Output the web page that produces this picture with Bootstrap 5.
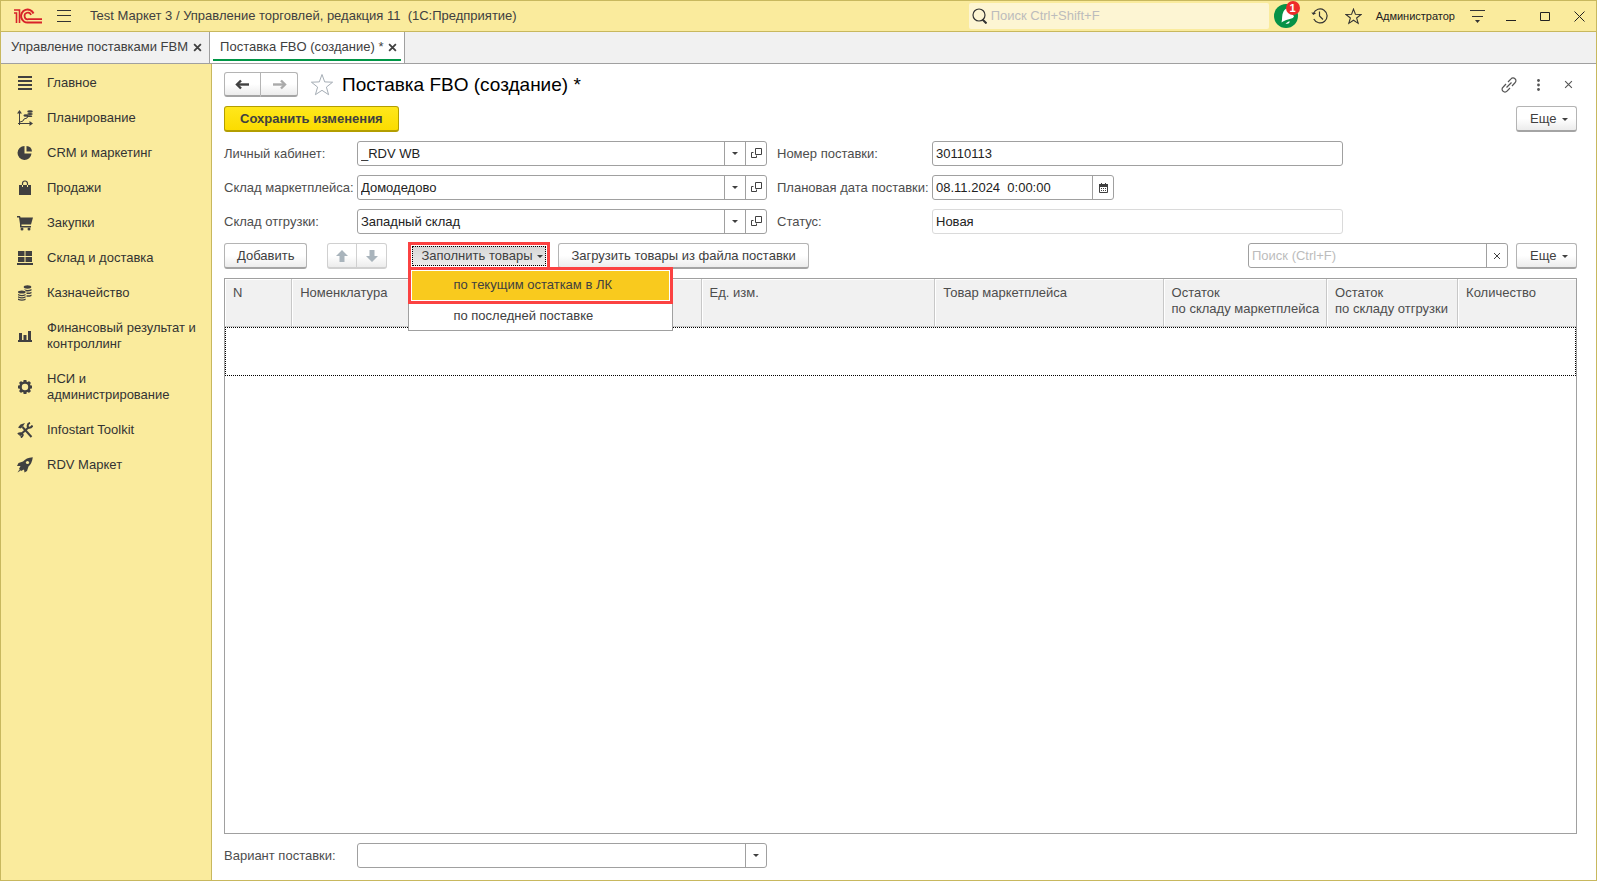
<!DOCTYPE html>
<html lang="ru">
<head>
<meta charset="utf-8">
<meta name="viewport" content="width=device-width, initial-scale=1">
<title>Поставка FBO (создание)</title>
<link href="https://cdn.jsdelivr.net/npm/bootstrap@5.3.0/dist/css/bootstrap.min.css" rel="stylesheet">
<style>
  :root { --gold: #c8b85e; --cream: #faeb9d; --ink: #404040; --line: #a0a0a0; }
  body { font: 13px/16px "Liberation Sans", Arial, sans-serif; color: var(--ink); background: #fff; }
  a { color: inherit; text-decoration: none; }
  svg { display: block; flex: none; }
  .app-window { border: 1px solid var(--gold); }
  .icon-btn { border: 0; background: none; padding: 0; color: inherit; display: flex; align-items: center; justify-content: center; }

  .title-bar { background: var(--cream); height: 31px; border-bottom: 1px solid var(--gold); padding-left: 12px; }
  .main-menu { margin-left: 14px; }
  .app-name { margin-left: 19px; }
  .app-search { background: #fdf5d3; width: 300px; height: 26px; border-radius: 2px; padding-left: 3px; }
  .app-search input { border: 0; background: none; outline: 0; padding: 0 0 0 4px; width: 100%; }
  input::placeholder { color: #bcbcbc; opacity: 1; }
  .win-tools .icon-btn { width: 34px; height: 30px; }
  .user-name { font-size: 11px; padding: 0 5px; color: #222; }
  .bell { width: 24px; height: 24px; }
  .bell-count { position: absolute; top: -3px; right: -2px; width: 14px; height: 14px; border-radius: 50%; background: #ee2a2a; color: #fff; font-size: 11px; font-weight: bold; line-height: 14px; text-align: center; }

  .tab-strip { background: #f1f1f1; height: 32px; border-bottom: 1px solid var(--line); }
  .doc-tab { border-right: 1px solid var(--line); padding: 0 7px 1px 10px; gap: 5px; }
  .doc-tab.current { background: #fff; box-shadow: inset 3px 0 #fff, inset -3px 0 #fff, inset 0 -2px #fff, inset 0 -4px #009646; }

  .side-menu { width: 211px; background: var(--cream); border-right: 1px solid var(--gold); padding-top: 1px; }
  .side-menu a { display: flex; align-items: center; gap: 14px; padding: 10px 14px 9px 16px; color: #333; }

  .work-area { padding: 8px 19px 12px 12px; min-width: 0; }
  .stack > * + * { margin-top: 9px; }
  .form-title { font-size: 19px; line-height: 24px; color: #000; margin: 0; }
  .push { font-size: 13px; line-height: 16px; height: 26px; padding: 0 12px; color: var(--ink); border: 1px solid #b4b4b4; border-bottom: 2px solid #a4a4a4; border-radius: 3px; background: linear-gradient(#fff 50%, #ececec); white-space: nowrap; }
  .push.split { padding: 0; display: flex; align-items: center; justify-content: center; }
  .push.primary { font-weight: bold; border-color: #b39e00; background: linear-gradient(#ffe71c, #fbdc00); padding: 0 15px; }
  .push.more { padding: 0 5px 0 10px; width: 61px; }
  .push.pale { border-color: #d0d0d0; }
  .push.nav-arrow { width: 37px; height: 25px; }
  .push.move { width: 30px; }
  .caret-sm { display: inline-block; border: 3px solid transparent; border-top-color: currentColor; border-bottom: 0; vertical-align: 2px; }
  .more .caret-sm { margin-left: 2px; }

  .field-grid { display: grid; grid-template-columns: 133px 410fr 165px 411fr 234fr; row-gap: 9px; align-items: center; }
  .field-grid label { color: #4d4d4d; white-space: nowrap; }
  .field-grid label.second { padding-left: 10px; }
  .box { display: flex; height: 25px; border: 1px solid var(--line); border-radius: 3px; background: #fff; overflow: hidden; }
  .box input, .box select { flex: 1; min-width: 0; border: 0; outline: 0; padding: 0 3px; color: #222; background: none; appearance: none; }
  .box .icon-btn { width: 21px; border-left: 1px solid var(--line); flex: none; }
  .box.readonly { border-color: #dadada; }
  .date-box { width: 182px; }
  .list-search { width: 260px; }

  .fill-wrap { margin: -1px 0 -1px 21px; width: 142px; height: 28px; border: 3px solid #fb4242; }
  .fill-wrap .push { border: 1px solid #fff; border-radius: 0; height: 22px; width: 100%; padding: 0 3px 0 9px; background: linear-gradient(#d6d6d6, #ececec); outline: 1px dotted #000; outline-offset: -2px; }
  .fill-menu.dropdown-menu { top: 22px; left: -3px; width: 265px; min-width: 0; padding: 0; margin: 0; font-size: 13px; border: 1px solid var(--line); border-radius: 0; color: var(--ink); }
  .fill-menu .dropdown-item { line-height: 16px; padding: 5px 44px 6px; color: var(--ink); }
  .fill-menu .picked { margin: -1px; width: calc(100% + 2px); border: 3px solid #fb4242; box-shadow: inset 0 0 0 1px #fff; background: #f9ca1e; padding: 7px 42px 8px; }

  .list-frame { border: 1px solid var(--line); }
  .goods { width: 100%; table-layout: fixed; border-collapse: separate; border-spacing: 0; }
  .goods th { font-weight: normal; vertical-align: top; height: 48px; padding: 6px 8px; background: #f1f1f1; border-left: 1px solid #c8c8c8; border-bottom: 1px solid #c8c8c8; box-shadow: inset 1px 1px #fff; color: #4d4d4d; white-space: nowrap; overflow: hidden; }
  .goods th:first-child { border-left: 0; }
  .goods td { height: 49px; padding: 0; }
  .goods tbody tr { outline: 1px dotted #000; outline-offset: -1px; }
  .c-n { width: 4.9%; } .c-name { width: 30.3%; } .c-unit { width: 17.3%; } .c-item { width: 16.9%; } .c-mp { width: 12.1%; } .c-wh { width: 9.7%; }
</style>
</head>
<body>
<svg width="0" height="0" class="position-absolute" aria-hidden="true">
  <symbol id="i-open" viewBox="0 0 11 11"><path d="M4.500.500h6v6h-6zM2.500 4.500h-2v5h5v-2" fill="none" stroke="currentColor"/></symbol>
  <symbol id="i-x" viewBox="0 0 8 8"><path d="M1 1l6 6M7 1L1 7" stroke="currentColor" fill="none"/></symbol>
  <symbol id="i-xb" viewBox="0 0 8 8"><path d="M1 1l6 6M7 1L1 7" stroke="currentColor" stroke-width="1.600" fill="none"/></symbol>
  <symbol id="i-star" viewBox="0 0 24 24"><path d="M12 1.500l2.700 7.400 7.900.3-6.200 4.900 2.200 7.600L12 17.300l-6.600 4.400 2.200-7.600L1.400 9.200l7.900-.3z" fill="none" stroke="currentColor" stroke-width="var(--sw,1)"/></symbol>
</svg>

<div class="app-window min-vh-100 d-flex flex-column">
  <header class="title-bar d-flex align-items-center">
    <svg width="30" height="16" viewBox="0 0 30 16" fill="none" stroke="#d8232a" stroke-width="2" aria-label="1С"><path d="M1 5h2.500v10M1 2h5.500v13" stroke-width="1.600"/><path d="M20.500 5.500A6.500 6.500 0 1 0 15.500 14.500H29"/><path d="M18 7A3.300 3.300 0 1 0 15.500 11.200H29" stroke-width="1.700"/></svg>
    <button class="icon-btn main-menu" aria-label="Главное меню"><svg width="14" height="12" viewBox="0 0 14 12"><path d="M0 .5h14M0 5.500h14M0 11.500h14" stroke="#333"/></svg></button>
    <span class="app-name text-nowrap">Test Маркет 3 / Управление торговлей, редакция 11&nbsp; (1С:Предприятие)</span>
    <div class="app-search d-flex align-items-center ms-auto">
      <svg width="15" height="16" viewBox="0 0 15 16" fill="none" stroke="#333"><circle cx="7" cy="7" r="6" stroke-width="1.200"/><path d="M10.500 11.500l4 4" stroke-width="2"/></svg>
      <input type="search" placeholder="Поиск Ctrl+Shift+F" aria-label="Поиск">
    </div>
    <div class="win-tools d-flex align-items-center">
      <button class="icon-btn" aria-label="Уведомления"><span class="bell position-relative">
        <svg width="24" height="24" viewBox="0 0 24 24"><circle cx="12" cy="12" r="12" fill="#079247"/><path d="M7.500 18.500C8.500 15 7.500 11 9.500 7.500 11 5 13 3.500 15 4l5 8.500c-1.500 2.500-3.500 2-6 3-2.500.8-4.500 1.500-6.500 3z" fill="#fff"/><path d="M11.500 19.500l4-2.500q.5 3.500-4 2.500z" fill="#fff"/></svg>
        <span class="bell-count">1</span></span></button>
      <button class="icon-btn" aria-label="История"><svg width="17" height="16" viewBox="0 0 17 16" fill="none" stroke="#333" stroke-width="1.200"><path d="M2.500 5.500A7 7 0 1 1 2.800 11M8.500 3.500V8l3.500 3.500"/><path d="M.3 4.500l2 2.500 3-2z" fill="#333" stroke="none"/></svg></button>
      <button class="icon-btn" aria-label="Избранное"><svg width="17" height="17" color="#333" style="--sw:1.500"><use href="#i-star"/></svg></button>
      <a href="#" class="user-name">Администратор</a>
      <button class="icon-btn" aria-label="Настройки"><svg width="15" height="13" viewBox="0 0 15 13"><path d="M0 .5h15M2 6.500h11" stroke="#333"/><path d="M5 10h5l-2.500 3z" fill="#333"/></svg></button>
      <button class="icon-btn" aria-label="Свернуть"><svg width="10" height="9" viewBox="0 0 10 9"><path d="M0 8.500h10" stroke="#222"/></svg></button>
      <button class="icon-btn" aria-label="Развернуть"><svg width="10" height="9" viewBox="0 0 10 9"><path d="M.5.500h9v8h-9z" fill="none" stroke="#222"/></svg></button>
      <button class="icon-btn" aria-label="Закрыть"><svg width="11" height="11" viewBox="0 0 11 11"><path d="M.5.500l10 10M10.500.500l-10 10" stroke="#222"/></svg></button>
    </div>
  </header>

  <nav class="tab-strip d-flex">
    <div class="doc-tab d-flex align-items-center"><a href="#">Управление поставками FBM</a><button class="icon-btn" aria-label="Закрыть вкладку"><svg width="9" height="9"><use href="#i-xb"/></svg></button></div>
    <div class="doc-tab current d-flex align-items-center"><a href="#">Поставка FBO (создание) *</a><button class="icon-btn" aria-label="Закрыть вкладку"><svg width="9" height="9"><use href="#i-xb"/></svg></button></div>
  </nav>

  <div class="d-flex flex-grow-1">
    <nav class="side-menu flex-shrink-0">
      <a href="#"><svg width="16" height="16" viewBox="0 0 16 16"><path d="M1 2h14M1 6h14M1 10h14M1 14h14" stroke="#404040" stroke-width="2"/></svg>Главное</a>
      <a href="#"><svg width="16" height="16" viewBox="0 0 16 16" fill="#404040"><path d="M2.500 15V2M1 13.500h13M3 12l3-1 1-2 3-1 1-2" fill="none" stroke="#404040"/><path d="M0 3.500L2.500 0 5 3.500zM12.500 11l3.500 2.500-3.500 2.500z"/><ellipse cx="9" cy="5.500" rx="2.600" ry="1.200"/><ellipse cx="13" cy="1.500" rx="2.800" ry="1.200"/><ellipse cx="13" cy="4" rx="2.800" ry=".9"/><ellipse cx="12.500" cy="6.200" rx="2.800" ry=".9"/></svg>Планирование</a>
      <a href="#"><svg width="16" height="16" viewBox="0 0 16 16" fill="#404040"><path d="M7.500 1v7.500H14.500A7 7 0 1 1 7.500 1z"/><path d="M9.500 1A6 6 0 0 1 15 6.500H9.500z"/></svg>CRM и маркетинг</a>
      <a href="#"><svg width="16" height="16" viewBox="0 0 16 16"><path d="M2 5h12v10H2z" fill="#404040"/><path d="M5.500 7V3.500a2.500 2.500 0 0 1 5 0V7" fill="none" stroke="#404040" stroke-width="1.200"/><path d="M5.500 5v2M10.500 5v2" stroke="#faeb9d"/></svg>Продажи</a>
      <a href="#"><svg width="16" height="16" viewBox="0 0 16 16" fill="#404040"><path d="M0 1h3l.6 1.500H16L14 9.500H4.500V11H14v1.500H3V9L2 2.500H0z"/><circle cx="5" cy="14" r="1.500"/><circle cx="12" cy="14" r="1.500"/></svg>Закупки</a>
      <a href="#"><svg width="16" height="16" viewBox="0 0 16 16"><path d="M1 1h6.500v5H1zM8.500 1H15v5H8.500zM1 7h6.500v5H1zM8.500 7H15v5H8.500zM0 13h16v2H0z" fill="#404040"/></svg>Склад и доставка</a>
      <a href="#"><svg width="16" height="16" viewBox="0 0 16 16" fill="#404040"><ellipse cx="10.500" cy="2" rx="3.800" ry="1.700"/><path d="M7 4q3.500 2 7.500 0v1.500q-3 1.500-5.500.8zM9.500 7.500q3 .4 5-.8v1.500q-2 1.200-5 .8zM9.500 10.200q3 .4 5-.8v1.500q-2 1.200-5 .8z"/><ellipse cx="4.800" cy="7" rx="3.800" ry="1.500"/><path d="M1 9q4 2 7.600 0v1.200q-3.600 2-7.600 0zM1 11.300q4 2 7.600 0v1.200q-3.600 2-7.600 0zM1 13.600q4 2 7.600 0V15q-3.600 1.600-7.600 0z"/></svg>Казначейство</a>
      <a href="#"><svg width="16" height="16" viewBox="0 0 16 16"><path d="M1 12h14v2H1zM2 5h3v7H2zM6.500 7h3v5h-3zM11 3h3v9h-3z" fill="#404040"/></svg><span>Финансовый результат и контроллинг</span></a>
      <a href="#"><svg width="16" height="16" viewBox="0 0 16 16"><circle cx="8" cy="8" r="4.500" fill="none" stroke="#404040" stroke-width="2.600"/><path d="M8 1v3M8 12v3M1 8h3M12 8h3M3 3l2 2M11 11l2 2M13 3l-2 2M5 11l-2 2" stroke="#404040" stroke-width="3"/></svg><span>НСИ и администрирование</span></a>
      <a href="#"><svg width="16" height="16" viewBox="0 0 16 16" fill="none" stroke="#404040" stroke-width="2"><path d="M5.500 5L14.500 15"/><path d="M1 5.500L3.500 2.500 8 1 5.500 5 3.500 6.500z" fill="#404040" stroke="none"/><path d="M2.500 13.500L12 5"/><path d="M13 .8Q9.800 2 11 5.500q3 1 4.500-2M.8 12q3.500-2 5 1-.5 1.500-2 2.500"/></svg>Infostart Toolkit</a>
      <a href="#"><svg width="16" height="16" viewBox="0 0 16 16" fill="#404040"><path d="M15.800.2Q9 .8 6 4.500L1.500 6 0 9h3.500L2 12l2 2 3-1.500.5 3 2.500-1.500 1.500-4.500Q15 6.500 15.800.2z"/><circle cx="10.500" cy="5.500" r="1.600" fill="#faeb9d"/><path d="M.5 15.500l1.800-2.800 1 1z"/></svg>RDV Маркет</a>
    </nav>

    <main class="work-area stack flex-grow-1 d-flex flex-column">
      <div class="d-flex align-items-center">
        <div class="d-flex">
          <button class="push split nav-arrow rounded-end-0" aria-label="Назад"><svg width="15" height="11" viewBox="0 0 15 11" fill="none" stroke="#404040"><path d="M2 5.500h12" stroke-width="2.400"/><path d="M6 1.500L2 5.500l4 4" stroke-width="2.400"/></svg></button>
          <button class="push split nav-arrow rounded-start-0 border-start-0" aria-label="Вперед"><svg width="15" height="11" viewBox="0 0 15 11" fill="none" stroke="#aaa"><path d="M1 5.500h12" stroke-width="2.400"/><path d="M9 1.500l4 4-4 4" stroke-width="2.400"/></svg></button>
        </div>
        <button class="icon-btn ms-2 me-2 px-1 pe-0" aria-label="В избранное"><svg width="24" height="24" color="#a5adb5"><use href="#i-star"/></svg></button>
        <h1 class="form-title">Поставка FBO (создание) *</h1>
        <div class="d-flex ms-auto gap-3 align-items-center">
          <button class="icon-btn" aria-label="Ссылка"><svg width="16" height="16" viewBox="0 0 16 16" fill="none" stroke="#555" stroke-width="1.200"><path d="M7 5l3-3.200a2.600 2.600 0 0 1 4 0 2.600 2.600 0 0 1 0 4L11 9M9 11l-3 3.200a2.600 2.600 0 0 1-4 0 2.600 2.600 0 0 1 0-4L5 7M5.500 10.500l5-5"/></svg></button>
          <button class="icon-btn ps-1 pe-2" aria-label="Еще действия"><svg width="3" height="12" viewBox="0 0 3 12" fill="#555"><circle cx="1.500" cy="1.500" r="1.400"/><circle cx="1.500" cy="6" r="1.400"/><circle cx="1.500" cy="10.500" r="1.400"/></svg></button>
          <button class="icon-btn me-1" aria-label="Закрыть"><svg width="9" height="9" color="#555"><use href="#i-x"/></svg></button>
        </div>
      </div>

      <div class="d-flex justify-content-between">
        <button class="push primary">Сохранить изменения</button>
        <button class="push more">Еще <i class="caret-sm"></i></button>
      </div>

      <div class="field-grid">
        <label for="cabinet">Личный кабинет:</label>
        <div class="box"><input id="cabinet" value="_RDV WB"><button class="icon-btn" aria-label="Выбрать"><i class="caret-sm"></i></button><button class="icon-btn" aria-label="Открыть"><svg width="11" height="11"><use href="#i-open"/></svg></button></div>
        <label class="second" for="number">Номер поставки:</label>
        <div class="box"><input id="number" value="30110113"></div><span></span>

        <label for="mp">Склад маркетплейса:</label>
        <div class="box"><input id="mp" value="Домодедово"><button class="icon-btn" aria-label="Выбрать"><i class="caret-sm"></i></button><button class="icon-btn" aria-label="Открыть"><svg width="11" height="11"><use href="#i-open"/></svg></button></div>
        <label class="second" for="plan">Плановая дата поставки:</label>
        <div class="box date-box"><input id="plan" value="08.11.2024&nbsp; 0:00:00"><button class="icon-btn" aria-label="Календарь"><svg width="9" height="10" viewBox="0 0 9 10"><path d="M.5 1.500h8v8h-8z" fill="none" stroke="#404040"/><path d="M0 1h9v3H0zM2 0h1v1H2zM6 0h1v1H6z" fill="#404040"/><path d="M2 5.500h5M2 7.500h5" stroke="#404040" stroke-dasharray="1 1"/></svg></button></div><span></span>

        <label for="ship">Склад отгрузки:</label>
        <div class="box"><input id="ship" value="Западный склад"><button class="icon-btn" aria-label="Выбрать"><i class="caret-sm"></i></button><button class="icon-btn" aria-label="Открыть"><svg width="11" height="11"><use href="#i-open"/></svg></button></div>
        <label class="second" for="status">Статус:</label>
        <div class="box readonly"><input id="status" value="Новая" readonly></div><span></span>
      </div>

      <div class="d-flex">
        <button class="push">Добавить</button>
        <div class="d-flex ms-3 ps-1">
          <button class="push split pale move rounded-end-0" aria-label="Вверх"><svg width="12" height="12" viewBox="0 0 12 12"><path d="M6 0l6 6H8.500v6h-5V6H0z" fill="#a9b4bc"/></svg></button>
          <button class="push split pale move rounded-start-0 border-start-0" aria-label="Вниз"><svg width="12" height="12" viewBox="0 0 12 12"><path d="M6 12L0 6h3.500V0h5v6H12z" fill="#a9b4bc"/></svg></button>
        </div>
        <div class="fill-wrap dropdown">
          <button class="push d-flex align-items-center justify-content-between" aria-expanded="true">Заполнить товары <i class="caret-sm"></i></button>
          <ul class="dropdown-menu fill-menu show">
            <li><a class="dropdown-item picked" href="#">по текущим остаткам в ЛК</a></li>
            <li><a class="dropdown-item" href="#">по последней поставке</a></li>
          </ul>
        </div>
        <button class="push ms-2">Загрузить товары из файла поставки</button>
        <div class="box list-search ms-auto"><input type="text" placeholder="Поиск (Ctrl+F)" aria-label="Поиск в списке"><button class="icon-btn" aria-label="Очистить"><svg width="8" height="8"><use href="#i-x"/></svg></button></div>
        <button class="push more ms-2">Еще <i class="caret-sm"></i></button>
      </div>

      <div class="list-frame flex-grow-1">
        <table class="goods">
          <colgroup><col class="c-n"><col class="c-name"><col class="c-unit"><col class="c-item"><col class="c-mp"><col class="c-wh"><col></colgroup>
          <thead><tr><th>N</th><th>Номенклатура</th><th>Ед. изм.</th><th>Товар маркетплейса</th><th>Остаток<br>по складу маркетплейса</th><th>Остаток<br>по складу отгрузки</th><th>Количество</th></tr></thead>
          <tbody><tr><td colspan="7"></td></tr></tbody>
        </table>
      </div>

      <div class="field-grid">
        <label for="variant">Вариант поставки:</label>
        <div class="box"><select id="variant"><option></option></select><button class="icon-btn" aria-label="Выбрать"><i class="caret-sm"></i></button></div>
      </div>
    </main>
  </div>
</div>
<script src="https://cdn.jsdelivr.net/npm/bootstrap@5.3.0/dist/js/bootstrap.bundle.min.js"></script>
</body>
</html>
